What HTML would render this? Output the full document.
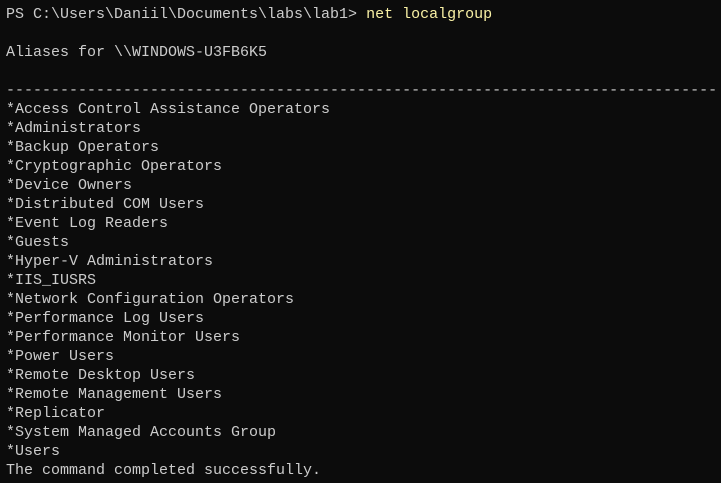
<!DOCTYPE html>
<html><head><style>
html,body{margin:0;padding:0;background:#0c0c0c;width:721px;height:483px;overflow:hidden}
pre{margin:0;padding:5px 0 0 6px;font-family:"Liberation Mono",monospace;font-size:15px;line-height:19px;color:#cccccc;white-space:pre}
.y{color:#f9f1a5}
</style></head><body><pre>PS C:\Users\Daniil\Documents\labs\lab1&gt; <span class="y">net localgroup</span>

Aliases for \\WINDOWS-U3FB6K5

-------------------------------------------------------------------------------
*Access Control Assistance Operators
*Administrators
*Backup Operators
*Cryptographic Operators
*Device Owners
*Distributed COM Users
*Event Log Readers
*Guests
*Hyper-V Administrators
*IIS_IUSRS
*Network Configuration Operators
*Performance Log Users
*Performance Monitor Users
*Power Users
*Remote Desktop Users
*Remote Management Users
*Replicator
*System Managed Accounts Group
*Users
The command completed successfully.</pre></body></html>
